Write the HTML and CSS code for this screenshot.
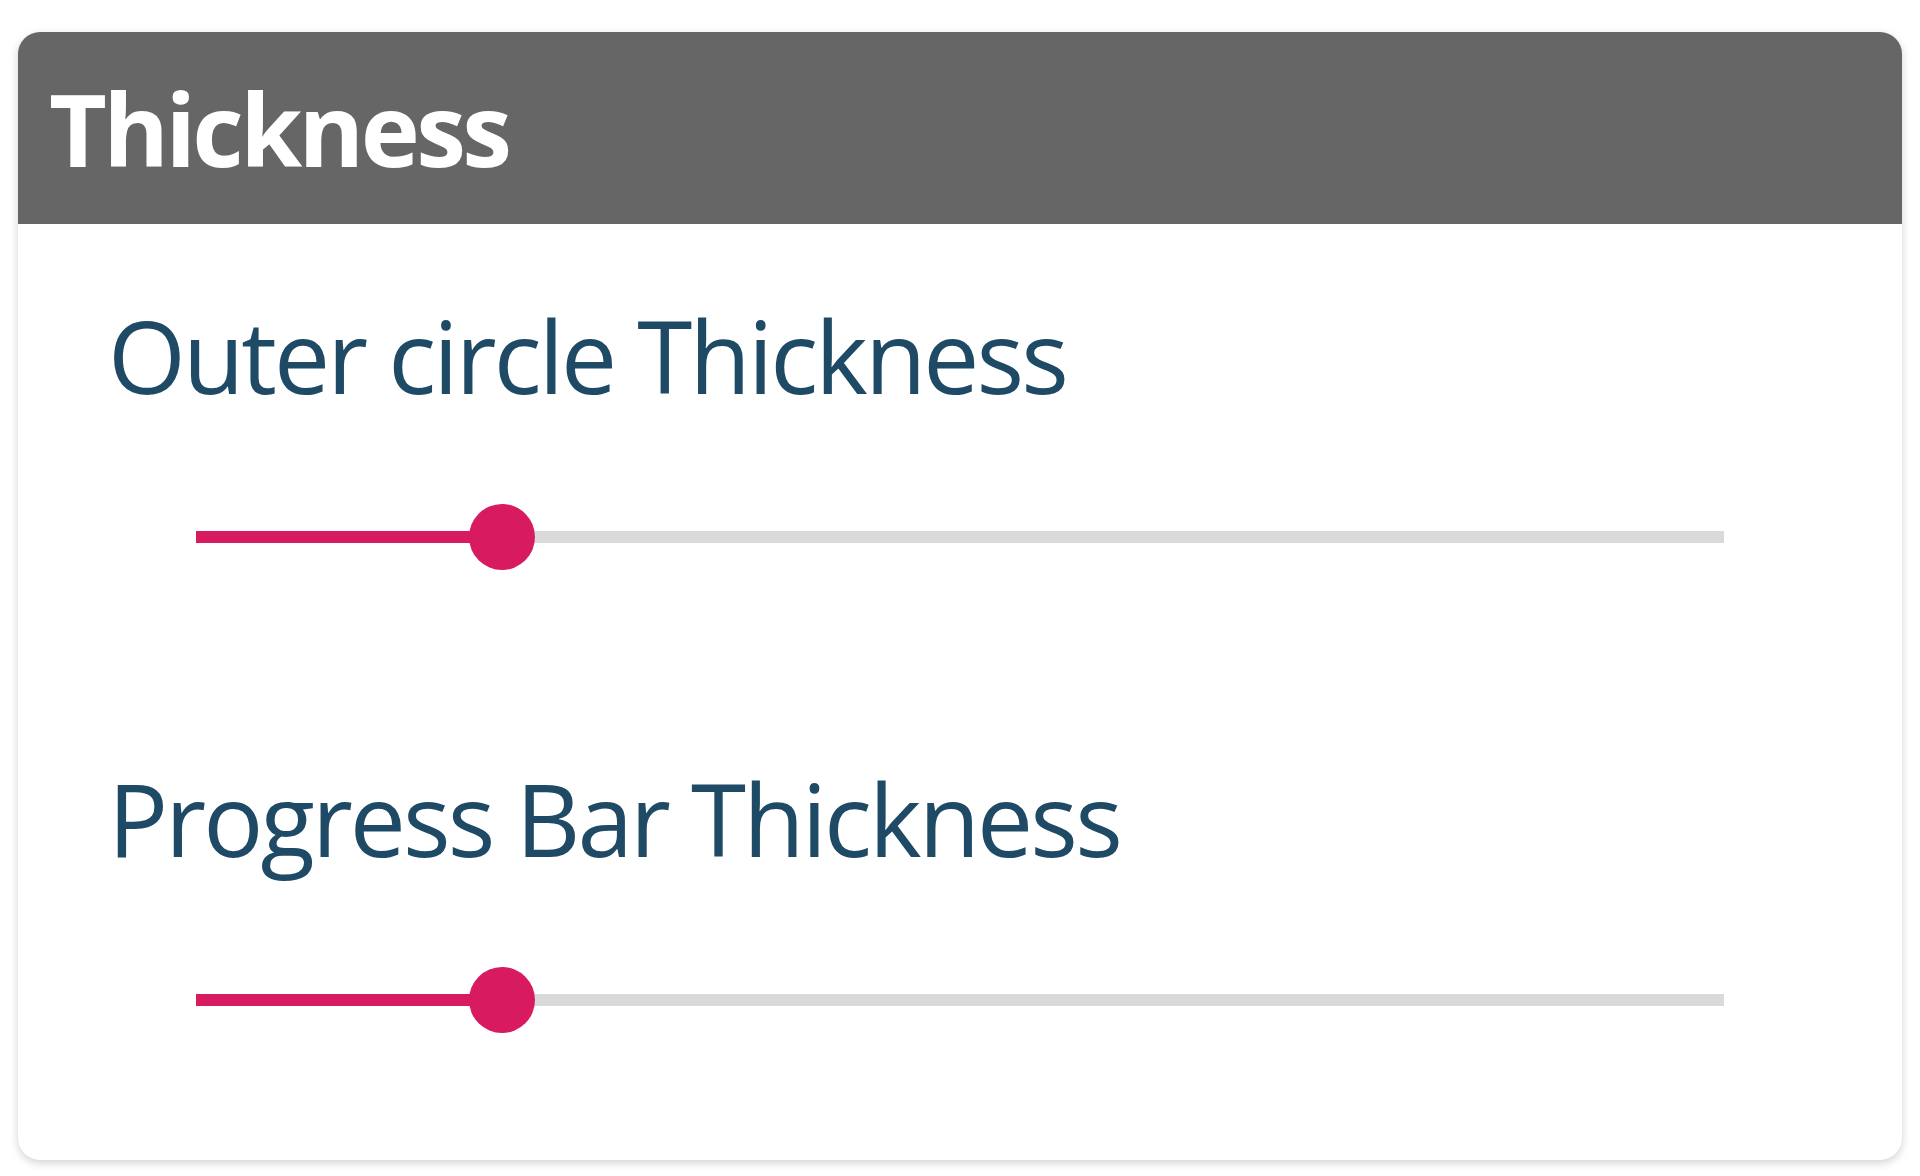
FILE: index.html
```html
<!DOCTYPE html>
<html lang="en">
<head>
    <meta charset="UTF-8">
    <meta name="viewport" content="width=device-width, initial-scale=1.0">
    <title>Thickness</title>
    <link rel="stylesheet" href="styles.css">
</head>
<body>

<div class="panel">
    <div class="panel-header">
        <h2>Thickness</h2>
    </div>
    <div class="panel-body">
        <div class="setting">
            <label class="setting-label">Outer circle Thickness</label>
            <div class="slider">
                <div class="track">
                    <div class="fill" style="width: 20%;"></div>
                    <div class="thumb" style="left: 20%;"></div>
                </div>
            </div>
        </div>
        <div class="setting">
            <label class="setting-label">Progress Bar Thickness</label>
            <div class="slider">
                <div class="track">
                    <div class="fill" style="width: 20%;"></div>
                    <div class="thumb" style="left: 20%;"></div>
                </div>
            </div>
        </div>
    </div>
</div>

</body>
</html>
```

FILE: styles.css
```css
body {
    font-family: "Open Sans", "Noto Sans", sans-serif;
    background-color: #fff;
    margin: 0;
    padding: 32px 18px 16px 18px;
}

.panel {
    background-color: #fff;
    border-radius: 22px;
    box-shadow: 0 3px 8px rgba(0, 0, 0, 0.18);
    overflow: hidden;
}

.panel-header {
    background-color: #666;
    height: 192px;
    padding-left: 31px;
}

.panel-header h2 {
    margin: 0;
    color: #fff;
    font-size: 100px;
    font-weight: 700;
    line-height: 192px;
    letter-spacing: -3.6px;
}

.panel-body {
    padding: 71px 0 127px 90px;
}

.setting + .setting {
    margin-top: 188px;
}

.setting-label {
    display: block;
    color: #1f4a66;
    font-size: 100px;
    font-weight: 400;
    line-height: 120px;
    letter-spacing: -2.9px;
}

.slider {
    margin: 89px 178px 0 88px;
    height: 66px;
    display: flex;
    align-items: center;
}

.track {
    position: relative;
    width: 100%;
    height: 12px;
    background-color: #dadada;
}

.fill {
    height: 100%;
    background-color: #d81b60;
}

.thumb {
    position: absolute;
    top: 50%;
    width: 66px;
    height: 66px;
    margin: -33px 0 0 -33px;
    border-radius: 50%;
    background-color: #d81b60;
}
```
